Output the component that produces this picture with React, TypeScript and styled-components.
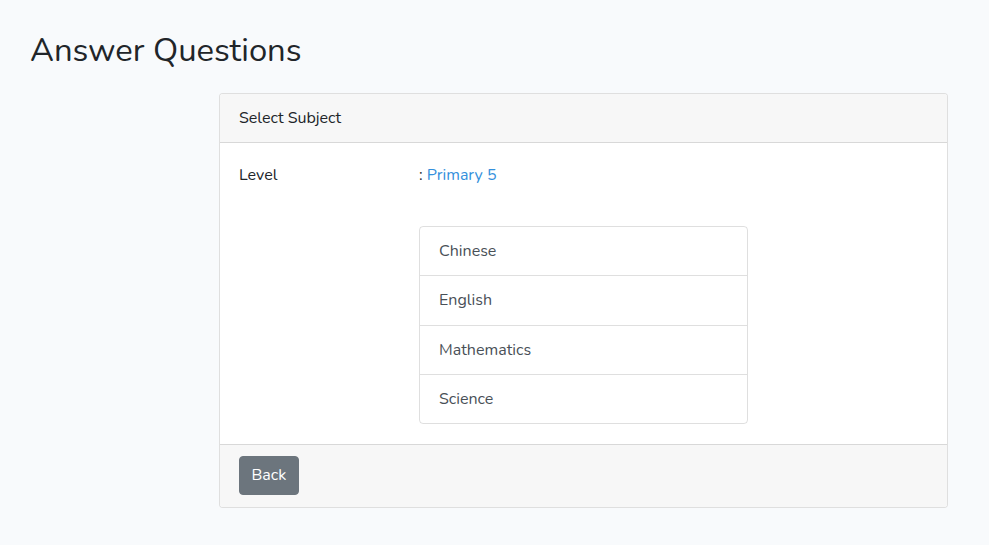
import React from "react";
import styled, { createGlobalStyle } from "styled-components";

const Global = createGlobalStyle`
  html, body { margin: 0; padding: 0; }
  body {
    background: #f8fafc;
    font-family: "Nunito", "Lato", "Noto Sans", sans-serif;
    font-size: 16px;
    line-height: 1.5;
    color: #212529;
  }
  * { box-sizing: border-box; }
`;

const Page = styled.main`
  padding: 30px 41px 37px 30px;
`;

const Title = styled.h2`
  margin: 0 0 21px 0;
  font-size: 32.8px;
  font-weight: 400;
  line-height: 42px;
  color: #212529;
`;

const Card = styled.section`
  margin-left: 189px;
  background: #fff;
  border: 1px solid rgba(0, 0, 0, 0.125);
  border-radius: 4px;
  overflow: hidden;
`;

const CardHeader = styled.div`
  padding: 12px 19px;
  line-height: 24px;
  background: #f7f7f7;
  border-bottom: 1px solid rgba(0, 0, 0, 0.125);
`;

const CardBody = styled.div`
  padding: 20px 19px;
`;

const InfoRow = styled.div`
  display: grid;
  grid-template-columns: 180px 1fr;
  line-height: 24px;
  margin-bottom: 39px;
`;

const Value = styled.span`
  color: #212529;
`;

const Link = styled.a`
  color: #3490dc;
  text-decoration: none;
`;

const ListWrap = styled.div`
  margin-left: 180px;
  width: 329px;
`;

const List = styled.ul`
  list-style: none;
  margin: 0;
  padding: 0;
  border: 1px solid rgba(0, 0, 0, 0.125);
  border-radius: 4px;
`;

const Item = styled.li`
  padding: 12px 19px;
  line-height: 24.25px;
  color: #495057;
  cursor: pointer;
  & + & { border-top: 1px solid rgba(0, 0, 0, 0.125); }
`;

const CardFooter = styled.div`
  padding: 11px 19px 12px;
  background: #f7f7f7;
  border-top: 1px solid rgba(0, 0, 0, 0.125);
`;

const Button = styled.button`
  display: block;
  font-family: inherit;
  font-size: 16px;
  line-height: 25px;
  padding: 6px 11.5px;
  color: #fff;
  background: #6c757d;
  border: 1px solid #6c757d;
  border-radius: 4px;
  cursor: pointer;
`;

const subjects = ["Chinese", "English", "Mathematics", "Science"];

export default function App() {
  return (
    <>
      <Global />
      <Page>
        <Title>Answer Questions</Title>
        <Card>
          <CardHeader>Select Subject</CardHeader>
          <CardBody>
            <InfoRow>
              <span>Level</span>
              <Value>
                : <Link href="#">Primary 5</Link>
              </Value>
            </InfoRow>
            <ListWrap>
              <List>
                {subjects.map((s) => (
                  <Item key={s}>{s}</Item>
                ))}
              </List>
            </ListWrap>
          </CardBody>
          <CardFooter>
            <Button>Back</Button>
          </CardFooter>
        </Card>
      </Page>
    </>
  );
}
